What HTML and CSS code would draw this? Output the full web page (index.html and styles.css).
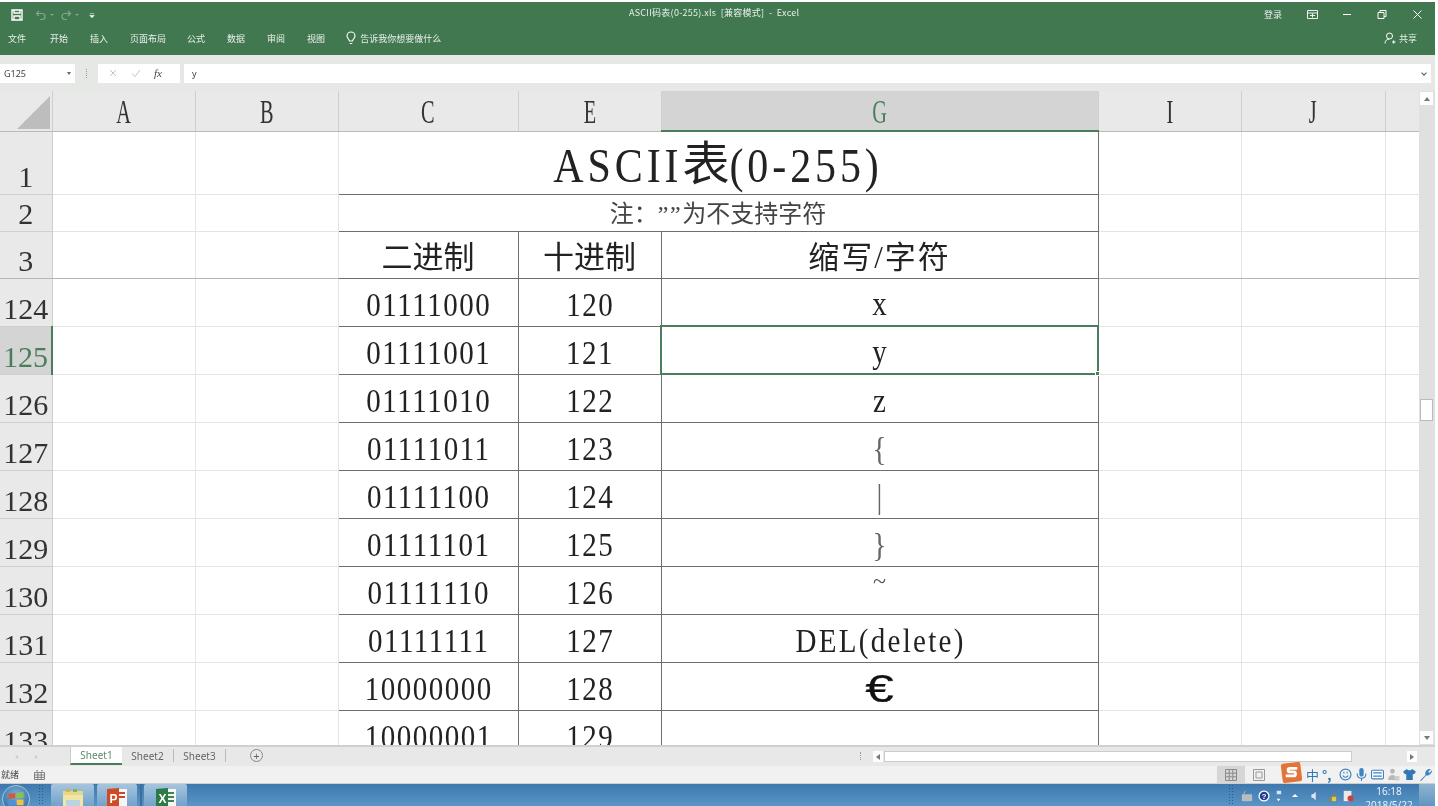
FILE: index.html
```html
<!DOCTYPE html>
<html lang="zh-CN">
<head>
    <meta charset="UTF-8">
    <title>ASCII码表(0-255).xls [兼容模式] - Excel</title>
    <link rel="stylesheet" href="styles.css">
</head>
<body>
<div class="app">

    <div class="ribbon">
        <div class="title-row">
            <div class="quick">
                <svg class="ico-save" viewBox="0 0 12 12"><path d="M1 1h10v10H1zM3 1v3h6V1M3 11V7h6v4" fill="none" stroke="#fff" stroke-width="1.4"/></svg>
                <svg class="ico-q" viewBox="0 0 12 12"><path d="M4 2 1.500 4.500 4 7M2 4.500h5a3 3 0 0 1 0 6H5" fill="none" stroke="#7fa88c" stroke-width="1.2"/></svg>
                <span class="caret-sm"></span>
                <svg class="ico-q" viewBox="0 0 12 12"><path d="M8 2l2.500 2.500L8 7M10 4.500H5a3 3 0 0 0 0 6h2" fill="none" stroke="#7fa88c" stroke-width="1.2"/></svg>
                <span class="caret-sm"></span>
                <svg class="ico-custom" viewBox="0 0 8 8"><path d="M1 1.500h6M1 4h6L4 7z" fill="#fff" stroke="#fff" stroke-width=".7"/></svg>
            </div>
            <div class="doc-title">ASCII码表(0-255).xls&nbsp; [兼容模式]&nbsp; -&nbsp; Excel</div>
            <div class="win-btns">
                <span class="login">登录</span>
                <svg class="win-ico w-ribbon" viewBox="0 0 11 9"><path d="M.5.500h10v8H.5zM.5 3h10M3 5.500h5M5.500 3.500v4" fill="none" stroke="#fff" stroke-width=".9"/></svg>
                <svg class="win-ico w-min" viewBox="0 0 11 9"><path d="M1 4.500h8" stroke="#fff"/></svg>
                <svg class="win-ico w-max" viewBox="0 0 11 9"><path d="M1 2.500h6v6H1zM3 2.500V.500h6v6H7" fill="none" stroke="#fff"/></svg>
                <svg class="win-ico w-close" viewBox="0 0 11 9"><path d="M1.500.500l8 8M9.500.500l-8 8" stroke="#fff"/></svg>
            </div>
        </div>
        <div class="tab-row">
            <span class="rtab t-file">文件</span>
            <span class="rtab">开始</span>
            <span class="rtab">插入</span>
            <span class="rtab t-page">页面布局</span>
            <span class="rtab">公式</span>
            <span class="rtab">数据</span>
            <span class="rtab">审阅</span>
            <span class="rtab t-view">视图</span>
            <svg class="ico-bulb" viewBox="0 0 10 14"><path d="M5 1a4 4 0 0 1 4 4c0 2-2 3-2.500 5h-3C3 8 1 7 1 5a4 4 0 0 1 4-4zM3.700 12.500h2.600" fill="none" stroke="#fff" stroke-width="1.100"/></svg>
            <span class="tell">告诉我你想要做什么</span>
            <span class="share">
                <svg class="ico-user" viewBox="0 0 12 12"><circle cx="5.500" cy="4" r="3" fill="none" stroke="#fff"/><path d="M1 11.500c0-3 2-4.500 4.500-4.500M8 10h3.500M9.700 8.300v3.400" fill="none" stroke="#fff"/></svg>
                共享
            </span>
        </div>
    </div>

    <div class="formula-bar">
        <div class="name-box">G125<span class="caret"></span></div>
        <span class="grip"></span>
        <div class="fx-box">
            <svg class="fx-ico" viewBox="0 0 10 10"><path d="M2 2l6 6M8 2 2 8" stroke="#c4c4c4"/></svg>
            <svg class="fx-ico" viewBox="0 0 10 10"><path d="M1 5.500 4 8.500 9 2" fill="none" stroke="#c4c4c4"/></svg>
            <span class="fx-text">fx</span>
        </div>
        <div class="fx-input">y<span class="fx-down"></span></div>
    </div>

    <div class="sheet-area">
        <div class="grid-wrap">
            <table class="grid">
                <colgroup>
                    <col class="c-head"><col class="c-w"><col class="c-w"><col class="c-c"><col class="c-w"><col class="c-g"><col class="c-w"><col class="c-j"><col class="c-last">
                </colgroup>
                <tr class="r-colhead">
                    <th class="corner"><span class="corner-tri"></span></th>
                    <th><span class="ch">A</span></th><th><span class="ch">B</span></th><th><span class="ch">C</span></th><th><span class="ch">E</span></th><th class="col-on"><span class="ch">G</span></th><th><span class="ch">I</span></th><th><span class="ch">J</span></th><th></th>
                </tr>
                <tr class="r-1">
                    <th class="rh">1</th><td></td><td></td>
                    <td colspan="3" class="title-cell bx"><span class="title-tx">ASCII<span class="title-cjk">表</span>(0-255)</span></td>
                    <td></td><td></td><td></td>
                </tr>
                <tr class="r-2">
                    <th class="rh">2</th><td></td><td></td>
                    <td colspan="3" class="note-cell bx">注：<span class="quotes">””</span>为不支持字符</td>
                    <td></td><td></td><td></td>
                </tr>
                <tr class="r-3">
                    <th class="rh">3</th><td></td><td></td>
                    <td class="hd bx">二进制</td><td class="hd bx">十进制</td><td class="hd hd-wide bx">缩写/字符</td>
                    <td></td><td></td><td></td>
                </tr>
                <tr class="r-d">
                    <th class="rh">124</th><td></td><td></td>
                    <td class="bx"><span class="tx">01111000</span></td><td class="bx"><span class="tx">120</span></td><td class="bx"><span class="tx">x</span></td>
                    <td></td><td></td><td></td>
                </tr>
                <tr class="r-d">
                    <th class="rh row-on">125</th><td></td><td></td>
                    <td class="bx"><span class="tx">01111001</span></td><td class="bx"><span class="tx">121</span></td><td class="bx cell-on"><span class="tx">y</span><span class="fill-handle"></span></td>
                    <td></td><td></td><td></td>
                </tr>
                <tr class="r-d">
                    <th class="rh">126</th><td></td><td></td>
                    <td class="bx"><span class="tx">01111010</span></td><td class="bx"><span class="tx">122</span></td><td class="bx"><span class="tx">z</span></td>
                    <td></td><td></td><td></td>
                </tr>
                <tr class="r-d">
                    <th class="rh">127</th><td></td><td></td>
                    <td class="bx"><span class="tx">01111011</span></td><td class="bx"><span class="tx">123</span></td><td class="bx sym"><span class="tx">{</span></td>
                    <td></td><td></td><td></td>
                </tr>
                <tr class="r-d">
                    <th class="rh">128</th><td></td><td></td>
                    <td class="bx"><span class="tx">01111100</span></td><td class="bx"><span class="tx">124</span></td><td class="bx sym"><span class="tx">|</span></td>
                    <td></td><td></td><td></td>
                </tr>
                <tr class="r-d">
                    <th class="rh">129</th><td></td><td></td>
                    <td class="bx"><span class="tx">01111101</span></td><td class="bx"><span class="tx">125</span></td><td class="bx sym"><span class="tx">}</span></td>
                    <td></td><td></td><td></td>
                </tr>
                <tr class="r-d">
                    <th class="rh">130</th><td></td><td></td>
                    <td class="bx"><span class="tx">01111110</span></td><td class="bx"><span class="tx">126</span></td><td class="bx tilde"><span class="tx">~</span></td>
                    <td></td><td></td><td></td>
                </tr>
                <tr class="r-d">
                    <th class="rh">131</th><td></td><td></td>
                    <td class="bx"><span class="tx">01111111</span></td><td class="bx"><span class="tx">127</span></td><td class="bx del"><span class="tx">DEL(delete)</span></td>
                    <td></td><td></td><td></td>
                </tr>
                <tr class="r-d">
                    <th class="rh">132</th><td></td><td></td>
                    <td class="bx"><span class="tx">10000000</span></td><td class="bx"><span class="tx">128</span></td><td class="bx euro"><span class="euro-tx">€</span></td>
                    <td></td><td></td><td></td>
                </tr>
                <tr class="r-d">
                    <th class="rh">133</th><td></td><td></td>
                    <td class="bx"><span class="tx">10000001</span></td><td class="bx"><span class="tx">129</span></td><td class="bx"></td>
                    <td></td><td></td><td></td>
                </tr>
            </table>
        </div>
        <div class="vscroll">
            <span class="sb-btn"><span class="arr-up"></span></span>
            <div class="v-track"><span class="v-thumb"></span></div>
            <span class="sb-btn"><span class="arr-down"></span></span>
        </div>
    </div>

    <div class="tabs-bar">
        <div class="tab-nav"><span class="nav-l"></span><span class="nav-r"></span></div>
        <div class="stab stab-on">Sheet1</div>
        <div class="stab">Sheet2</div>
        <div class="stab">Sheet3</div>
        <span class="add-sheet">+</span>
        <span class="grip h-grip"></span>
        <div class="hscroll">
            <span class="sb-btn"><span class="arr-left"></span></span>
            <div class="h-track"><span class="h-thumb"></span></div>
            <span class="sb-btn"><span class="arr-right"></span></span>
        </div>
    </div>

    <div class="status-bar">
        <span class="ready">就绪</span>
        <svg class="ico-macro" viewBox="0 0 11 10"><path d="M.5 2.500h10v7H.5zM.5 5h10M.5 7.300h10M3.800 2.500v7M7.200 2.500v7M2 .800h2M7 .800h2" fill="none" stroke="#777" stroke-width=".9"/></svg>
        <div class="views">
            <span class="view view-on"><svg viewBox="0 0 12 12"><path d="M.5.500h11v11H.5zM.5 4.200h11M.5 7.800h11M4.200.500v11M7.800.500v11" fill="none" stroke="#8a8a8a"/></svg></span>
            <span class="view"><svg viewBox="0 0 12 12"><path d="M.5.500h11v11H.5zM3 3h6v6H3z" fill="none" stroke="#9a9a9a"/></svg></span>
        </div>
        <div class="ime">
            <svg class="ime-s" viewBox="0 0 20 20"><rect x="1.500" y="1.500" width="17" height="17" rx="2" fill="#e2743a" transform="rotate(-7 10 10)"/><path d="M15 6.500H8.500c-2 0-2 3 0 3h3.500c2 0 2 3.500 0 3.500H5" fill="none" stroke="#fff" stroke-width="2.400"/></svg>
            <span class="ime-zh">中</span>
            <span class="ime-dots">°,</span>
            <svg class="ime-i" viewBox="0 0 12 12"><circle cx="6" cy="6" r="5" fill="none" stroke="#3e83c4" stroke-width="1.100"/><path d="M3.500 7c1 2 4 2 5 0" fill="none" stroke="#3e83c4"/><path d="M4.500 3.500v1.500M7.500 3.500v1.500" stroke="#3e83c4"/></svg>
            <svg class="ime-i" viewBox="0 0 12 12"><rect x="4" y="0" width="4" height="8" rx="2" fill="#3e83c4"/><path d="M2 5c0 6 8 6 8 0M6 9v3" fill="none" stroke="#3e83c4"/></svg>
            <svg class="ime-i" viewBox="0 0 12 12"><rect x=".5" y="2" width="11" height="8" rx="1" fill="#fff" stroke="#3e83c4"/><path d="M2 4.500h8M2 7.500h8" stroke="#3e83c4"/></svg>
            <svg class="ime-i" viewBox="0 0 12 12"><circle cx="5" cy="3" r="2.200" fill="#b9b9b9"/><path d="M1 11c0-6 8-6 8 0z" fill="#b9b9b9"/><rect x="7" y="7.500" width="4.500" height="4" fill="#ccc"/></svg>
            <svg class="ime-i" viewBox="0 0 12 12"><path d="M3.500 1 0 3.500 2 6l1-.7V11h6V5.300L10 6l2-2.500L8.500 1C7.500 2.500 4.500 2.500 3.500 1z" fill="#2f78b8"/></svg>
            <svg class="ime-i" viewBox="0 0 12 12"><path d="M1 11.500 6 6.500C5 3.500 7.500.500 11 1L8.500 3.500 9.500 4.500 12 2C12.300 5 9 7.500 6.500 7L2 12z" fill="#3e83c4"/></svg>
        </div>
    </div>

    <div class="taskbar">
        <span class="start">
            <svg viewBox="0 0 12 12"><path d="M1 2.500 5.500 2v3.500L1 6z" fill="#d9583a"/><path d="M6.500 1.800 11 1.200v4.100L6.500 5.500z" fill="#8cc04f"/><path d="M1 7l4.500-.5V10L1 10.500z" fill="#4a93d8"/><path d="M6.500 6.500 11 6.300v3.900L6.500 10z" fill="#f2c343"/></svg>
        </span>
        <span class="tb-grip"></span>
        <div class="tb-app">
            <svg viewBox="0 0 24 24"><path d="M2 5h20v19H2z" fill="#f1e5a8"/><path d="M2 5h20v4H2z" fill="#e8d68b"/><rect x="5" y="3" width="4" height="3" fill="#d9b24a"/><rect x="12" y="3" width="4" height="3" fill="#8ab05c"/><rect x="5" y="14" width="14" height="8" fill="#b9d3df"/></svg>
        </div>
        <div class="tb-app tb-ppt">
            <svg viewBox="0 0 24 24"><rect x="11" y="3" width="11" height="18" fill="#f6f6f6"/><path d="M13 7h7M13 11h7" stroke="#c9492c" stroke-width="2"/><path d="M2 3l12-1v21L2 21z" fill="#cf4b26"/><text x="4.500" y="17" class="tb-letter">P</text></svg>
        </div>
        <span class="tb-sep"></span>
        <div class="tb-app">
            <svg viewBox="0 0 24 24"><rect x="11" y="3" width="11" height="18" fill="#f6f6f6"/><path d="M13 7h7M13 11h7M13 15h7" stroke="#3f8450" stroke-width="2"/><path d="M2 3l12-1v21L2 21z" fill="#2c7a45"/><text x="4.500" y="17" class="tb-letter">X</text></svg>
        </div>
        <div class="tray">
            <span class="tb-grip"></span>
            <svg class="tray-i" viewBox="0 0 14 14"><rect x="1" y="5" width="12" height="8" rx="1" fill="#b9bdbf"/><path d="M3 5 5 1" stroke="#b9bdbf"/></svg>
            <svg class="tray-i" viewBox="0 0 14 14"><circle cx="7" cy="7" r="6.500" fill="#fff"/><circle cx="7" cy="7" r="5" fill="#243f8f"/><text x="7" y="10" class="tray-q">?</text></svg>
            <svg class="tray-i tray-sm" viewBox="0 0 8 14"><rect x="2" y="1" width="5" height="4" fill="#d9e4ec"/><path d="M2 10h4l-2 3z" fill="#fff"/></svg>
            <span class="tray-up"></span>
            <svg class="tray-i" viewBox="0 0 14 14"><path d="M4 5h2l3-3v10L6 9H4z" fill="#e4e8ea"/></svg>
            <svg class="tray-i" viewBox="0 0 14 14"><path d="M1 13 13 3v10z" fill="#7c8a5a"/><path d="M8 8h5v5H8z" fill="#e8c64a"/></svg>
            <svg class="tray-i" viewBox="0 0 14 14"><path d="M2 1h9v12H2z" fill="#e9e9e9"/><circle cx="10" cy="10" r="3.500" fill="#c7403a"/></svg>
            <div class="clock"><span>16:18</span><span>2018/5/22</span></div>
            <span class="show-desk"></span>
        </div>
    </div>
</div>
</body>
</html>
```

FILE: styles.css
```css
*{
    margin: 0;
    padding: 0;
    box-sizing: border-box;
}

html, body{
    width: 100%;
    height: 100%;
    overflow: hidden;
    background-color: #fff;
}

.app{
    width: 1435px;
    height: 806px;
    display: flex;
    flex-direction: column;
    padding-top: 2px;
    overflow: hidden;
    font-family: "Noto Sans CJK SC", sans-serif;
    filter: blur(.35px);
}

/* ---------------- ribbon ---------------- */
.ribbon{
    height: 53px;
    flex: none;
    background-color: #41784f;
    color: #e9f0eb;
    font-size: 9px;
}

.title-row{
    height: 24px;
    display: flex;
    align-items: center;
    position: relative;
    padding-left: 11px;
}

.quick{
    display: flex;
    align-items: center;
    gap: 3px;
    padding-top: 2px;
}

.ico-save{
    width: 12px;
    height: 12px;
    margin-right: 9px;
}

.ico-q{
    width: 12px;
    height: 12px;
}

.caret-sm{
    border-top: 2px solid #7fa88c;
    border-left: 2px solid transparent;
    border-right: 2px solid transparent;
    margin-right: 3px;
}

.ico-custom{
    width: 6px;
    height: 7px;
    margin-left: 4px;
}

.doc-title{
    position: absolute;
    left: 629px;
    top: 4px;
    font-size: 9px;
    line-height: 14px;
    letter-spacing: .25px;
    white-space: nowrap;
}

.win-btns{
    margin-left: auto;
    display: flex;
    align-items: center;
    padding-right: 12px;
}

.login{
    margin-right: 25px;
}

.win-ico{
    width: 11px;
    height: 9px;
    margin-left: 24px;
}

.w-ribbon{
    margin-left: 0;
}

.tab-row{
    height: 29px;
    display: flex;
    align-items: center;
    padding: 0 18px 5px 8px;
    position: relative;
}

.rtab{
    white-space: nowrap;
    margin-right: 22px;
}

.t-file{
    margin-right: 24px;
}

.t-page{
    margin-right: 21px;
}

.t-view{
    margin-right: 21px;
}

.ico-bulb{
    width: 10px;
    height: 14px;
    margin-right: 4px;
}

.share{
    margin-left: auto;
    display: flex;
    align-items: center;
    gap: 3px;
}

.ico-user{
    width: 12px;
    height: 12px;
}

/* ---------------- formula bar ---------------- */
.formula-bar{
    height: 36px;
    flex: none;
    background-color: #e6e8e6;
    display: flex;
    align-items: center;
    padding: 0 4px 0 0;
    font-size: 9px;
    color: #444;
}

.name-box{
    width: 75px;
    height: 19px;
    background-color: #fff;
    display: flex;
    align-items: center;
    justify-content: space-between;
    padding: 0 4px;
    font-family: "Noto Sans", sans-serif;
}

.caret{
    border-top: 3px solid #666;
    border-left: 2.500px solid transparent;
    border-right: 2.500px solid transparent;
}

.grip{
    width: 1px;
    height: 9px;
    margin: 0 11px 0 11px;
    border-left: 1px dotted #999;
}

.fx-box{
    width: 82px;
    height: 19px;
    background-color: #fff;
    display: flex;
    align-items: center;
    gap: 13px;
    padding-left: 10px;
    margin-right: 4px;
}

.fx-ico{
    width: 10px;
    height: 10px;
}

.fx-text{
    font-family: "Liberation Serif", serif;
    font-style: italic;
    font-size: 11px;
}

.fx-input{
    flex: 1;
    height: 19px;
    background-color: #fff;
    display: flex;
    align-items: center;
    justify-content: space-between;
    padding: 0 5px 0 8px;
    font-family: "Noto Sans", sans-serif;
}

.fx-down{
    width: 4px;
    height: 4px;
    border-right: 1px solid #555;
    border-bottom: 1px solid #555;
    transform: rotate(45deg);
}

/* ---------------- sheet ---------------- */
.sheet-area{
    height: 654px;
    flex: none;
    display: flex;
    overflow: hidden;
    background-color: #fff;
}

.grid-wrap{
    flex: 1;
    overflow: hidden;
}

.grid{
    table-layout: fixed;
    width: 1419px;
    border-collapse: collapse;
    font-family: "Liberation Serif", "Noto Sans CJK SC", serif;
    font-size: 30px;
    color: #222;
    text-spacing-trim: space-all;
}

.c-head{ width: 52px; }
.c-w{ width: 143px; }
.c-c{ width: 180px; }
.c-g{ width: 437px; }
.c-j{ width: 144px; }
.c-last{ width: 34px; }

.grid td{
    border: 1px solid #e4e4e4;
    text-align: center;
    vertical-align: bottom;
    padding: 0;
    white-space: nowrap;
    overflow: hidden;
    line-height: 44px;
}

.grid th{
    font-weight: normal;
    background-color: #e9e9e9;
    border: 1px solid #cfcfcf;
    border-width: 0 1px 1px 0;
    padding: 0;
    color: #333;
}

.r-colhead{ height: 40px; }
.r-colhead th{
    font-size: 29px;
    line-height: 36px;
    height: 40px;
    border-bottom: 1px solid #b9b9b9;
}

.ch{
    display: inline-block;
    transform: scale(.7, 1.15);
}

.r-1{ height: 63px; }
.r-2{ height: 37px; }
.r-3{ height: 47px; }
.r-d{ height: 48px; }

.r-3 td, .r-3 th{
    border-bottom: 1px solid #b5b5b5;
}

.rh{
    vertical-align: bottom;
    text-align: center;
    line-height: 32px;
    padding-bottom: 1px !important;
}

.corner{
    position: relative;
}

.corner-tri{
    position: absolute;
    right: 2px;
    bottom: 2px;
    border-right: 33px solid #bdbdbd;
    border-top: 33px solid transparent;
}

.col-on{
    background-color: #d4d4d4 !important;
    color: #4a7d5c !important;
    border-bottom: 2px solid #4a7d5c !important;
}

.row-on{
    background-color: #d4d4d4 !important;
    color: #4a7d5c !important;
    border-right: 2px solid #4a7d5c !important;
}

.grid td.bx{
    border: 1px solid #6e6e6e;
}

/* half-width look of the sheet font: narrow letters, stretched up */
.tx{
    display: inline-block;
    font-size: 29px;
    letter-spacing: 1.500px;
    margin-right: -1.500px;
    transform: scaleY(1.15);
}

.grid td.title-cell{
    line-height: 50px;
}

.title-tx{
    display: inline-block;
    font-size: 42px;
    letter-spacing: 3.900px;
    transform: translateY(1px) scaleY(1.15);
}

.title-cjk{
    display: inline-block;
    font-size: 47px;
    letter-spacing: 0;
    line-height: 44px;
    transform: scaleY(.87);
}

.grid td.note-cell{
    font-size: 24px;
    line-height: 33px;
    color: #444;
}

.quotes{
    letter-spacing: 1.500px;
}

.grid td.hd{
    font-size: 31px;
    line-height: 40px;
}

.grid td.hd-wide{
    letter-spacing: 2px;
}

.grid td.cell-on{
    border: 2px solid #4a7d5c;
    position: relative;
    overflow: visible;
}

.fill-handle{
    position: absolute;
    right: -3px;
    bottom: -3px;
    width: 5px;
    height: 5px;
    background-color: #4a7d5c;
    border: 1px solid #fff;
}

.grid td.sym{
    color: #666;
}

.grid td.tilde{
    vertical-align: top;
    line-height: 30px;
    color: #555;
}

.tilde .tx{
    font-size: 24px;
    transform: translateY(-3px);
}

.del .tx{
    letter-spacing: 2.300px;
    margin-right: -2.300px;
}

.euro-tx{
    display: inline-block;
    font-family: "Liberation Sans", sans-serif;
    font-size: 38px;
    line-height: 40px;
    color: #111;
    -webkit-text-stroke: .2px #111;
    transform: translateY(4px) scaleX(1.35);
}

/* ---------------- scrollbars ---------------- */
.vscroll{
    width: 16px;
    flex: none;
    background-color: #e0e0e0;
    display: flex;
    flex-direction: column;
}

.sb-btn{
    flex: none;
    width: 13px;
    height: 13px;
    margin: 1px 1px;
    background-color: #fdfdfd;
    display: flex;
    align-items: center;
    justify-content: center;
}

.v-track{
    flex: 1;
    position: relative;
}

.v-thumb{
    position: absolute;
    left: 1px;
    top: 293px;
    width: 13px;
    height: 22px;
    background-color: #fff;
    border: 1px solid #bbb;
}

.arr-up{
    border-bottom: 4px solid #777;
    border-left: 3px solid transparent;
    border-right: 3px solid transparent;
}

.arr-down{
    border-top: 4px solid #777;
    border-left: 3px solid transparent;
    border-right: 3px solid transparent;
}

.arr-left{
    border-right: 4px solid #777;
    border-top: 3px solid transparent;
    border-bottom: 3px solid transparent;
}

.arr-right{
    border-left: 4px solid #777;
    border-top: 3px solid transparent;
    border-bottom: 3px solid transparent;
}

.tabs-bar{
    height: 21px;
    flex: none;
    display: flex;
    align-items: stretch;
    background-color: #e8e8e8;
    border-top: 2px solid #d0d0d0;
    padding-right: 17px;
    font-family: "Noto Sans", sans-serif;
    font-size: 10px;
    color: #666;
}

.tab-nav{
    width: 70px;
    display: flex;
    align-items: center;
    gap: 17px;
    padding-left: 15px;
}

.nav-l{
    border-right: 3px solid #ccc;
    border-top: 2px solid transparent;
    border-bottom: 2px solid transparent;
}

.nav-r{
    border-left: 3px solid #ccc;
    border-top: 2px solid transparent;
    border-bottom: 2px solid transparent;
}

.stab{
    width: 52px;
    display: flex;
    align-items: center;
    justify-content: center;
    position: relative;
    border-right: 1px solid #bbb;
    margin: 2px 0 4px;
}

.stab-on{
    background-color: #fff;
    color: #5b8c6c;
    margin: 0 0 1px;
    border-bottom: 2px solid #4a7d5c;
    border-right: none;
    border-left: 1px solid #ccc;
}

.add-sheet{
    width: 13px;
    height: 13px;
    border: 1px solid #888;
    border-radius: 50%;
    margin: 2px 0 0 24px;
    font-size: 11px;
    line-height: 11px;
    text-align: center;
}

.h-grip{
    height: 8px;
    margin: 5px 11px 0 auto;
}

.hscroll{
    width: 546px;
    display: flex;
    align-items: center;
}

.hscroll .sb-btn{
    width: 10px;
    height: 11px;
}

.h-track{
    flex: 1;
    height: 11px;
    position: relative;
}

.h-thumb{
    position: absolute;
    left: 0;
    top: 0;
    width: 468px;
    height: 11px;
    background-color: #fff;
    border: 1px solid #ccc;
}

/* ---------------- status + taskbar ---------------- */
.status-bar{
    height: 18px;
    flex: none;
    background-color: #f1f1f1;
    display: flex;
    align-items: center;
    padding-left: 1px;
    font-size: 9px;
    color: #444;
    border-bottom: 1px solid #cfcfcf;
}

.ico-macro{
    width: 11px;
    height: 10px;
    margin-left: 15px;
}

.views{
    margin-left: auto;
    display: flex;
    align-items: stretch;
    height: 100%;
}

.view{
    width: 28px;
    display: flex;
    align-items: center;
    justify-content: center;
}

.view svg{
    width: 12px;
    height: 12px;
}

.view-on{
    background-color: #d6d6d6;
}

.ime{
    display: flex;
    align-items: center;
    gap: 3px;
    margin-left: 7px;
    padding-right: 3px;
    color: #2f78b8;
    font-size: 13px;
}

.ime-s{
    width: 23px;
    height: 23px;
    margin-top: -5px;
}

.ime-dots{
    font-weight: bold;
    width: 14px;
}

.ime-i{
    width: 13px;
    height: 13px;
}

.taskbar{
    height: 23px;
    flex: none;
    display: flex;
    align-items: flex-start;
    background: linear-gradient(#3f78ad, #5a96c8);
    overflow: hidden;
}

.start{
    width: 28px;
    height: 28px;
    flex: none;
    margin: 1px 0 0 2px;
    border-radius: 50%;
    background: radial-gradient(circle at 50% 35%, #7db1d8, #1f5f96);
    border: 1px solid #a9c6dc;
    display: flex;
    justify-content: center;
    padding-top: 4px;
}

.start svg{
    width: 18px;
    height: 18px;
}

.tb-grip{
    width: 6px;
    height: 23px;
    margin: 0 7px 0 8px;
    background-image: radial-gradient(#2d5a80 40%, transparent 45%);
    background-size: 3px 3px;
}

.tb-app{
    width: 43px;
    height: 23px;
    margin-right: 3px;
    display: flex;
    justify-content: center;
    padding-top: 2px;
    background: linear-gradient(#a6c5de, #6fa1c9);
    border-radius: 2px 2px 0 0;
}

.tb-ppt{
    width: 40px;
}

.tb-app svg{
    width: 24px;
    height: 24px;
}

.tb-letter{
    font-family: "Liberation Sans", sans-serif;
    font-size: 12px;
    font-weight: bold;
    fill: #fff;
}

.tb-sep{
    width: 2px;
    height: 23px;
    margin-right: 2px;
    background-color: #3e6f97;
}

.tray{
    margin-left: auto;
    display: flex;
    align-items: center;
    height: 23px;
    gap: 5px;
    color: #eaf2f8;
}

.tray .tb-grip{
    margin: 0 2px 0 0;
}

.tray-i{
    width: 12px;
    height: 12px;
}

.tray-sm{
    width: 7px;
    height: 14px;
}

.tray-q{
    font-family: "Liberation Sans", sans-serif;
    font-size: 9px;
    font-weight: bold;
    fill: #fff;
    text-anchor: middle;
}

.tray-up{
    border-bottom: 3px solid #fff;
    border-left: 3px solid transparent;
    border-right: 3px solid transparent;
    margin: 0 5px;
}

.clock{
    width: 60px;
    display: flex;
    flex-direction: column;
    align-items: center;
    font-family: "Noto Sans", sans-serif;
    font-size: 10px;
    line-height: 14px;
    align-self: flex-start;
}

.show-desk{
    width: 16px;
    height: 23px;
    margin-left: -5px;
    background: linear-gradient(#8fb3cf, #5f94bf);
}
```
